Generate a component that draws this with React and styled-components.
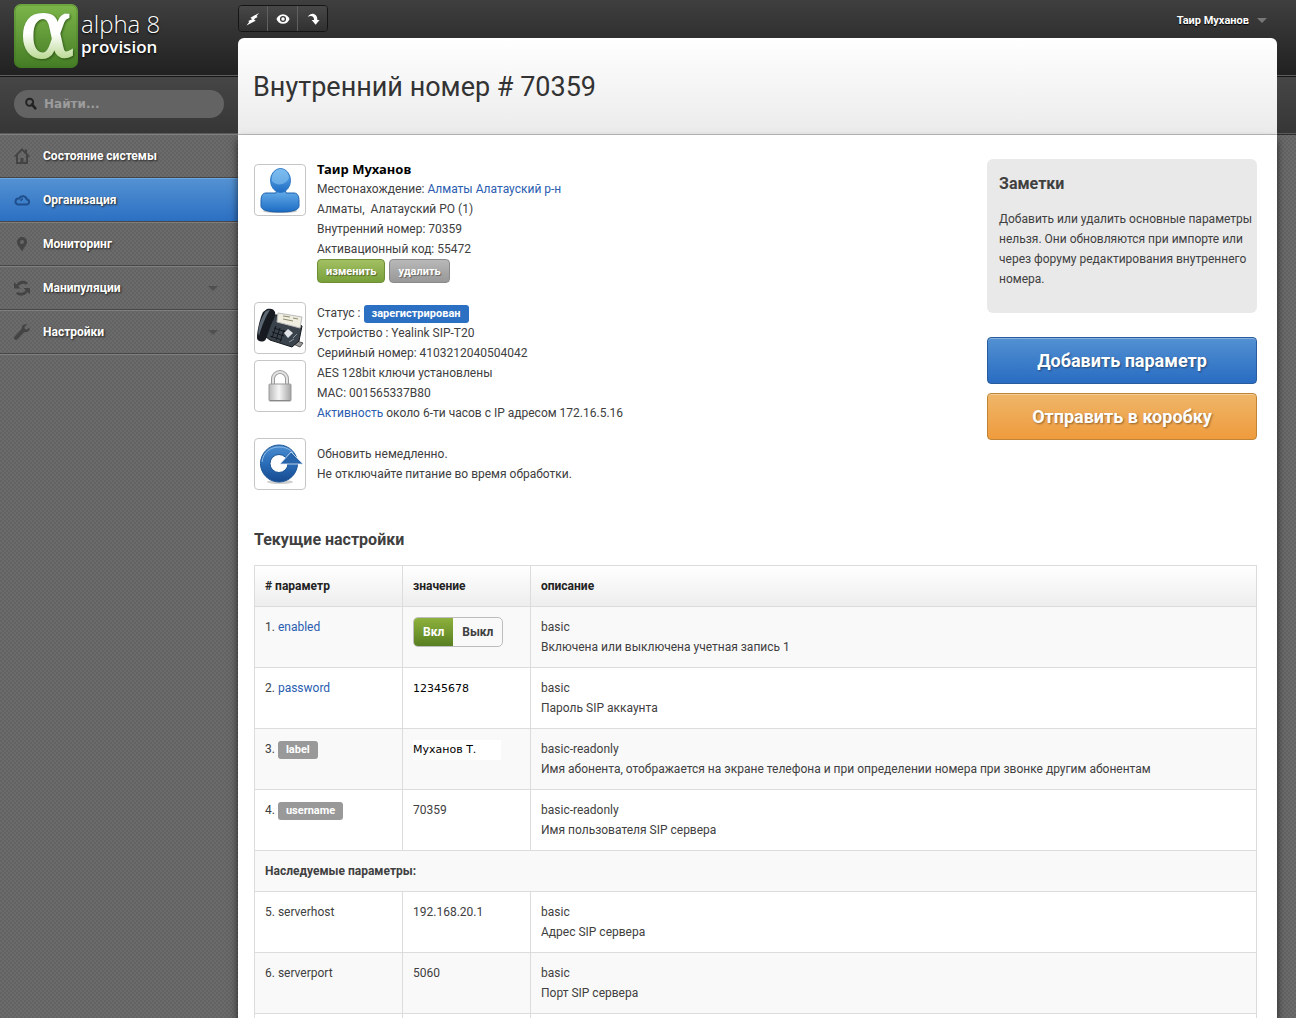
import React from "react";
import styled, { createGlobalStyle, css } from "styled-components";

const sans = 'Roboto, "Trebuchet MS", sans-serif';
const verdana = '"DejaVu Sans", Verdana, sans-serif';

const GlobalStyle = createGlobalStyle`
  * { box-sizing: border-box; }
  body { margin: 0; font: 12px/20px ${sans}; color: #404040; background: #666; }
  button, input { font-family: inherit; }
  h1, h2, p, ul { margin: 0; padding: 0; }
  a { color: #2a5db0; text-decoration: none; }
`;

const Page = styled.div`
  display: grid;
  grid-template-columns: 238px minmax(0, 1fr);
  min-height: 100vh;
  padding-right: 19px;
  background:
    linear-gradient(#3f3f3f, #212121 75px, #5e5e5e 75px, #5e5e5e 76px, #161616 76px, #161616 77px,
      #464646 77px, #363636 133px, #5a5a5a 133px, #5a5a5a 134px, #2c2c2c 134px, #2c2c2c 135px, transparent 135px)
      0 0 / 100% 135px no-repeat,
    repeating-conic-gradient(#6b6b6b 0 25%, #636363 0 50%) 0 0 / 4px 4px;
`;

const Sidebar = styled.aside`
  display: flex;
  flex-direction: column;
`;

const Brand = styled.a`
  display: flex;
  gap: 3px;
  height: 77px;
  padding: 4px 14px;
  color: #fff;
`;

const Logo = styled.svg`
  flex: none;
  overflow: visible;
`;

const LogoLetter = styled.text`
  font: 80px "DejaVu Serif", serif;
  filter: drop-shadow(1px 1px 1px rgba(30, 65, 12, 0.7));
`;

const BrandText = styled.span`
  display: flex;
  flex-direction: column;
  padding-top: 7px;
  font-family: "Open Sans", sans-serif;
  text-shadow: 0 1px 2px #000;
`;

const BrandTop = styled.span`
  font-size: 24px;
  font-weight: 300;
  line-height: 26px;
`;

const BrandBottom = styled.span`
  font-size: 17px;
  font-weight: 600;
  line-height: 20px;
`;

const SearchForm = styled.form`
  height: 57px;
  padding: 13px 14px;
`;

const SearchField = styled.label`
  display: flex;
  align-items: center;
  gap: 6px;
  height: 28px;
  padding: 0 10px;
  border-radius: 14px;
  background: #636363;
  color: #222;
`;

const SearchInput = styled.input`
  flex: 1;
  min-width: 0;
  padding: 0;
  border: 0;
  outline: 0;
  background: none;
  color: #fff;
  font: bold 12px/20px ${verdana};
  &::placeholder { color: #9c9c9c; opacity: 1; }
`;

const NavList = styled.ul`
  list-style: none;
`;

const NavLink = styled.a`
  display: flex;
  align-items: center;
  gap: 13px;
  height: 44px;
  padding: 0 20px 0 14px;
  border-top: 1px solid #808080;
  border-bottom: 1px solid #474747;
  color: #fff;
  font-size: 12px;
  font-weight: 700;
  text-shadow: 1px 1px 2px #222;
  svg { color: #444; flex: none; }
  ${(p) => p.$active && css`
    border-top-color: #6ba3dd;
    background: linear-gradient(#5391d2, #2c70c3);
    svg { color: #1f4f8c; }
  `}
`;

const NavText = styled.span`
  flex: 1;
`;

const Caret = styled.span`
  border: solid transparent;
  border-width: 5px 5px 0;
  border-top-color: ${(p) => p.$color};
`;

const NavEnd = styled.div`
  border-top: 1px solid #808080;
`;

const Main = styled.main`
  display: flex;
  flex-direction: column;
`;

const TopBar = styled.div`
  display: flex;
  justify-content: space-between;
  align-items: flex-start;
  height: 38px;
  padding: 5px 10px 0 0;
`;

const Toolbar = styled.div`
  display: flex;
  border: 1px solid #151515;
  border-radius: 4px;
  overflow: hidden;
`;

const ToolButton = styled.button`
  display: flex;
  align-items: center;
  justify-content: center;
  width: 30px;
  height: 25px;
  padding: 0;
  border: 0;
  border-left: 1px solid #606060;
  background: linear-gradient(#484848, #303030);
  color: #fff;
  &:first-child { border-left: 0; width: 28px; }
`;

const UserMenu = styled.button`
  display: flex;
  align-items: center;
  gap: 8px;
  height: 30px;
  padding: 0;
  border: 0;
  background: none;
  color: #fff;
  font-size: 11px;
  font-weight: 700;
  text-shadow: 0 1px 1px #000;
`;

const TitleBar = styled.header`
  padding: 29px 15px 27px;
  border-bottom: 1px solid #bdbdbd;
  border-radius: 6px 6px 0 0;
  background: linear-gradient(#fff, #ebebeb);
`;

const Title = styled.h1`
  color: #333;
  font-size: 27px;
  font-weight: 400;
  line-height: 40px;
`;

const Content = styled.div`
  flex: 1;
  padding: 24px 20px 0 16px;
  background: #fff;
  box-shadow: 0 5px 8px rgba(0, 0, 0, 0.65);
`;

const Overview = styled.div`
  display: grid;
  grid-template-columns: minmax(0, 1fr) 270px;
  gap: 20px;
`;

const Blocks = styled.div`
  display: flex;
  flex-direction: column;
  gap: 15px;
`;

const Block = styled.section`
  display: flex;
  gap: 11px;
`;

const Icons = styled.div`
  display: flex;
  flex-direction: column;
  gap: 6px;
  padding-top: ${(p) => p.$top || 0}px;
`;

const IconFrame = styled.div`
  display: flex;
  align-items: center;
  justify-content: center;
  width: 52px;
  height: 52px;
  border: 1px solid #c6c6c6;
  border-radius: 4px;
  background: #fff;
`;

const Lines = styled.div`
  padding-top: ${(p) => p.$top || 0}px;
`;

const PersonName = styled.h2`
  color: #000;
  font: bold 13px/20px "Noto Sans", sans-serif;
`;

const Actions = styled.div`
  display: flex;
  gap: 4px;
  padding-bottom: 4px;
`;

const SmallButton = styled.button`
  height: 24px;
  padding: 0 8px;
  border: 1px solid ${(p) => (p.$green ? "#6d8f36" : "#8a8a8a")};
  border-radius: 4px;
  background: ${(p) => (p.$green ? "linear-gradient(#a3c063, #78a03a)" : "linear-gradient(#b8b8b8, #989898)")};
  color: #fff;
  font-size: 11px;
  font-weight: 700;
  text-shadow: 1px 1px 1px rgba(0, 0, 0, 0.4);
`;

const Badge = styled.span`
  display: inline-block;
  padding: 0 8px;
  border-radius: 3px;
  background: ${(p) => (p.$blue ? "#2c70c3" : "#999")};
  color: #fff;
  font-size: 11px;
  font-weight: 700;
  line-height: 18px;
`;

const Side = styled.aside`
  display: flex;
  flex-direction: column;
`;

const Notes = styled.section`
  margin-bottom: 24px;
  padding: 13px 12px 24px;
  border-radius: 6px;
  background: #e9e9e9;
  white-space: nowrap;
`;

const Heading = styled.h2`
  margin-bottom: 13px;
  color: #404040;
  font-size: 16px;
  font-weight: 700;
  line-height: 24px;
`;

const BigButton = styled.button`
  height: 47px;
  margin-bottom: 9px;
  border: 1px solid ${(p) => (p.$orange ? "#bf8436" : "#285c9e")};
  border-radius: 4px;
  background: ${(p) => (p.$orange ? "linear-gradient(#efb669, #ef9b3d)" : "linear-gradient(#5391d2, #296cc2)")};
  box-shadow: inset 0 1px 0 rgba(255, 255, 255, 0.3);
  color: #fff;
  font-size: 18px;
  font-weight: 700;
  text-shadow: 1px 1px 2px rgba(0, 0, 0, 0.4);
`;

const Settings = styled.section`
  padding-top: 38px;
`;

const Table = styled.table`
  width: 100%;
  border-collapse: collapse;
  table-layout: fixed;
  th, td {
    padding: 10px;
    border: 1px solid #dcdcdc;
    text-align: left;
    vertical-align: top;
  }
  thead tr { background: linear-gradient(#fff, #ededed); }
  thead th { color: #222; font-weight: 700; }
  thead th:nth-child(1) { width: 148px; }
  thead th:nth-child(2) { width: 128px; }
  tbody tr:nth-child(odd) { background: #f9f9f9; }
  tbody tr:nth-child(even) { background: #fff; }
  tbody tr:last-child td { padding: 2px; border-bottom: 0; }
`;

const Typed = styled.span`
  display: inline-block;
  min-width: 88px;
  background: #fff;
  color: #000;
  font-family: ${verdana};
  font-size: 11px;
`;

const Toggle = styled.div`
  display: inline-flex;
  height: 30px;
  border: 1px solid #bdbdbd;
  border-radius: 5px;
  overflow: hidden;
  vertical-align: top;
`;

const ToggleOption = styled.label`
  padding: 0 9px;
  font-weight: 700;
  line-height: 28px;
  input { appearance: none; position: absolute; margin: 0; }
  &:has(input:checked) {
    background: linear-gradient(#8db13c, #587f22);
    color: #fff;
  }
`;

function LogoMark() {
  return (
    <Logo width="64" height="64" viewBox="0 0 64 64">
      <defs>
        <linearGradient id="logoBg" x1="0" y1="0" x2="0" y2="1">
          <stop offset="0" stopColor="#7db64a" /><stop offset="1" stopColor="#447c25" />
        </linearGradient>
        <linearGradient id="logoInk" gradientUnits="userSpaceOnUse" x1="0" y1="9" x2="0" y2="54">
          <stop offset="0.45" stopColor="#fff" /><stop offset="1" stopColor="#bddb98" />
        </linearGradient>
      </defs>
      <rect width="64" height="64" rx="7" fill="url(#logoBg)" />
      <rect x="1" y="1" width="62" height="62" rx="6" fill="none" stroke="#3f7521" strokeOpacity=".5" />
      <LogoLetter x="33" y="53" textAnchor="middle" fill="url(#logoInk)" stroke="url(#logoInk)" strokeWidth="2">α</LogoLetter>
    </Logo>
  );
}

const Glyph = ({ children, size = 16 }) => (
  <svg width={size} height={size} viewBox="0 0 16 16" fill="currentColor">{children}</svg>
);

const HomeIcon = () => (
  <Glyph><path fillRule="evenodd" d="M8 0 11 3V1.500h2V5l3 3.200-1 1-1-1V16H2V8.200l-1 1-1-1zM8 2.800 4 6.800V14h2.500v-4h3v4H12V6.800z" /></Glyph>
);
const CloudIcon = () => (
  <Glyph>
    <path fill="none" stroke="currentColor" strokeWidth="2" strokeLinejoin="round" d="M4 12.500h8.500a2.500 2.500 0 0 0 .3-5A4 4 0 0 0 5.200 6.600 3 3 0 0 0 4 12.500z" />
    <path fill="none" stroke="currentColor" strokeWidth="1.500" d="M7 9A2 2 0 0 1 9 7" />
  </Glyph>
);
const PinIcon = () => (
  <Glyph><path fillRule="evenodd" d="M8 1a5 5 0 0 1 5 5c0 3-3.500 6-5 9.500C6.500 12 3 9 3 6a5 5 0 0 1 5-5zm0 3a2 2 0 1 0 0 4 2 2 0 0 0 0-4z" /></Glyph>
);
const SwapIcon = () => (
  <Glyph>
    <path d="M0 2v6.500h6.500L4.300 6.300C6 3.800 9.500 3 13 4.500l.8-2C9.500-.4 4.800.6 2.400 4.400z" />
    <path d="M16 14.500V8H9.500l2.200 2.200c-1.700 2.500-5.200 3.300-8.700 1.800l-.8 2c4.300 2.900 9 1.900 11.400-1.900z" />
  </Glyph>
);
const WrenchIcon = () => (
  <Glyph><path d="M15.500 3.500 12.800 5.600 10.800 5 10.500 3 13.200.6C10.500-.4 7.200 1.300 7.600 5L.6 12.400a1.900 1.900 0 0 0 2.800 2.900l7-7.200c3.300.8 6-1.600 5.100-4.600z" /></Glyph>
);
const SearchIcon = () => (
  <Glyph size={14}><circle cx="6.500" cy="6" r="4" fill="none" stroke="currentColor" strokeWidth="2.200" /><path d="m9 8.500 4 4.500" stroke="currentColor" strokeWidth="3" strokeLinecap="round" /></Glyph>
);
const BoltIcon = () => (
  <Glyph size={14}><path d="M15 1 5 6.500l2 1.800-4.500 2 1.200 1.200L.5 15.500 11 10 9 8.200l4.300-2.400-1.200-1.200z" /></Glyph>
);
const EyeIcon = () => (
  <Glyph size={14}><path fillRule="evenodd" d="M8 2.500c3.600 0 6.500 2.500 7.500 5.500-1 3-3.900 5.500-7.500 5.500S1.500 11 .5 8C1.500 5 4.400 2.500 8 2.500zm0 2a3.500 3.500 0 1 0 0 7 3.500 3.500 0 0 0 0-7z" /><circle cx="8" cy="8" r="2" /></Glyph>
);
const TurnIcon = () => (
  <Glyph size={14}><path d="M2 5.500C4 2.500 7 1.500 9.500 2.500c2.300.9 3.500 3 3.500 6.500h2.500l-4.500 5.500L6.500 9h2.700c0-3.500-2.700-5.500-7.200-3.500z" /></Glyph>
);

const PersonPicture = () => (
  <svg width="44" height="46" viewBox="0 0 44 46">
    <defs>
      <linearGradient id="person" x1="0" y1="0" x2="0" y2="1"><stop offset="0" stopColor="#6bb2ec" /><stop offset="1" stopColor="#1d6cc4" /></linearGradient>
    </defs>
    <ellipse cx="22" cy="44" rx="17" ry="2" fill="#bbb" />
    <path d="M8 26h10l1-4h8l1 4h8c4 0 5 4 5 8v5c0 4-7 6-19 6S3 43 3 39v-5c0-4 1-8 5-8z" fill="url(#person)" stroke="#1c62b0" />
    <ellipse cx="22.500" cy="13.500" rx="10" ry="12" fill="url(#person)" stroke="#2d78c4" />
    <path d="M14 14c4 5 13 5 17-3-1-6-4-9-8.500-9S13 6 14 14z" fill="#8ec8f4" opacity=".55" />
  </svg>
);

const PhonePicture = () => (
  <svg width="50" height="44" viewBox="0 0 50 44">
    <path d="M42 35l6 2-3 4-9-4z" fill="#999" stroke="#555" />
    <path d="M14 9l10 0 23 11-3 15-7 6-22-7-8-6z" fill="#3a424b" stroke="#15181c" />
    <path d="M23 7l24 4-2 11-23-6z" fill="#efeee0" stroke="#bbb" />
    <path d="M28 10l7 1M28 13l10 2M38 12l5 1" stroke="#8e8b70" />
    <path d="M12 3c4-1 7 0 8 3 1 4-2 8-4 13l-5 14c-2 4-9 3-9-1C2 25 5 12 8 6z" fill="#171b21" />
    <path d="M9 8c1-3 3-4 6-4-4 6-8 15-11 26-2-6 1-15 5-22z" fill="#5c6773" />
    <path d="M19 22l12 4M17 26l12 4M15 30l12 4M21 20l-4 12M25 22l-4 12M29 24l-4 12" stroke="#14181d" />
    <path d="M33 23l5 4-5 5-4-5z" fill="#e2e5e8" />
    <path d="M38 32l4-4M34 36l5-3" stroke="#8b939c" />
  </svg>
);

const LockPicture = () => (
  <svg width="26" height="34" viewBox="0 0 26 34">
    <defs>
      <linearGradient id="lock" x1="0" y1="0" x2="1" y2="0"><stop offset="0" stopColor="#b9b9b9" /><stop offset=".45" stopColor="#f6f6f6" /><stop offset="1" stopColor="#a5a5a5" /></linearGradient>
    </defs>
    <path d="M6 18V10a7 7 0 0 1 14 0v8" fill="none" stroke="#9b9b9b" strokeWidth="4" />
    <path d="M6 18V10a7 7 0 0 1 14 0v8" fill="none" stroke="#e2e2e2" strokeWidth="2" />
    <rect x="2" y="15" width="22" height="17" rx="1" fill="url(#lock)" stroke="#999" />
    <path d="M3 31.500h20" stroke="#888" />
  </svg>
);

const RefreshPicture = () => (
  <svg width="46" height="44" viewBox="0 0 46 44">
    <defs>
      <linearGradient id="refresh" x1="0" y1="0" x2="0" y2="1"><stop offset="0" stopColor="#4a8dd0" /><stop offset=".5" stopColor="#2a6db8" /><stop offset="1" stopColor="#164a90" /></linearGradient>
    </defs>
    <ellipse cx="23" cy="40" rx="13" ry="2" fill="#d0d0d0" />
    <path fillRule="evenodd" d="M22 3a18.500 18.500 0 1 0 0 37 18.500 18.500 0 0 0 0-37zm0 9.500a9 9 0 1 1 0 18 9 9 0 0 1 0-18z" fill="url(#refresh)" stroke="#1c5596" />
    <path d="M5 20C6 10 14 5 22 5c6 0 11 2 14 6" fill="none" stroke="#8cbbe8" />
    <path d="M34 10l12 12H23z" fill="#2764ab" stroke="#dbe8f5" strokeWidth=".8" />
  </svg>
);

const navItems = [
  { text: "Состояние системы", Icon: HomeIcon },
  { text: "Организация", Icon: CloudIcon, active: true },
  { text: "Мониторинг", Icon: PinIcon },
  { text: "Манипуляции", Icon: SwapIcon, more: true },
  { text: "Настройки", Icon: WrenchIcon, more: true },
];

function OnOff() {
  return (
    <Toggle role="radiogroup" aria-label="enabled">
      <ToggleOption><input type="radio" name="enabled" defaultChecked />Вкл</ToggleOption>
      <ToggleOption><input type="radio" name="enabled" />Выкл</ToggleOption>
    </Toggle>
  );
}

const ownRows = [
  { n: 1, name: <a href="#enabled">enabled</a>, value: <OnOff />, kind: "basic", text: "Включена или выключена учетная запись 1" },
  { n: 2, name: <a href="#password">password</a>, value: <Typed>12345678</Typed>, kind: "basic", text: "Пароль SIP аккаунта" },
  { n: 3, name: <Badge>label</Badge>, value: <Typed>Муханов Т.</Typed>, kind: "basic-readonly", text: "Имя абонента, отображается на экране телефона и при определении номера при звонке другим абонентам" },
  { n: 4, name: <Badge>username</Badge>, value: "70359", kind: "basic-readonly", text: "Имя пользователя SIP сервера" },
];
const inheritedRows = [
  { n: 5, name: "serverhost", value: "192.168.20.1", kind: "basic", text: "Адрес SIP сервера" },
  { n: 6, name: "serverport", value: "5060", kind: "basic", text: "Порт SIP сервера" },
];

const Row = ({ row }) => (
  <tr>
    <td>{row.n}. {row.name}</td>
    <td>{row.value}</td>
    <td>{row.kind}<br />{row.text}</td>
  </tr>
);

export default function App() {
  return (
    <>
      <GlobalStyle />
      <Page>
        <Sidebar>
          <Brand href="#home">
            <LogoMark />
            <BrandText><BrandTop>alpha 8</BrandTop><BrandBottom>provision</BrandBottom></BrandText>
          </Brand>
          <SearchForm>
            <SearchField><SearchIcon /><SearchInput type="text" placeholder="Найти..." /></SearchField>
          </SearchForm>
          <nav>
            <NavList>
              {navItems.map(({ text, Icon, active, more }) => (
                <li key={text}>
                  <NavLink href="#nav" $active={active}>
                    <Icon /><NavText>{text}</NavText>{more && <Caret $color="#505050" />}
                  </NavLink>
                </li>
              ))}
            </NavList>
            <NavEnd />
          </nav>
        </Sidebar>
        <Main>
          <TopBar>
            <Toolbar>
              <ToolButton aria-label="bolt"><BoltIcon /></ToolButton>
              <ToolButton aria-label="eye"><EyeIcon /></ToolButton>
              <ToolButton aria-label="turn"><TurnIcon /></ToolButton>
            </Toolbar>
            <UserMenu>Таир Муханов <Caret $color="#777" /></UserMenu>
          </TopBar>
          <TitleBar><Title>Внутренний номер # 70359</Title></TitleBar>
          <Content>
            <Overview>
              <Blocks>
                <Block>
                  <Icons $top={5}><IconFrame><PersonPicture /></IconFrame></Icons>
                  <Lines>
                    <PersonName>Таир Муханов</PersonName>
                    <p>Местонахождение: <a href="#place">Алматы Алатауский р-н</a></p>
                    <p>Алматы, &nbsp;Алатауский РО (1)</p>
                    <p>Внутренний номер: 70359</p>
                    <p>Активационный код: 55472</p>
                    <Actions><SmallButton $green>изменить</SmallButton><SmallButton>удалить</SmallButton></Actions>
                  </Lines>
                </Block>
                <Block>
                  <Icons><IconFrame><PhonePicture /></IconFrame><IconFrame><LockPicture /></IconFrame></Icons>
                  <Lines $top={1}>
                    <p>Статус : <Badge $blue>зарегистрирован</Badge></p>
                    <p>Устройство : Yealink SIP-T20</p>
                    <p>Серийный номер: 4103212040504042</p>
                    <p>AES 128bit ключи установлены</p>
                    <p>MAC: 001565337B80</p>
                    <p><a href="#activity">Активность</a> около 6-ти часов с IP адресом 172.16.5.16</p>
                  </Lines>
                </Block>
                <Block>
                  <Icons><IconFrame><RefreshPicture /></IconFrame></Icons>
                  <Lines $top={6}>
                    <p>Обновить немедленно.</p>
                    <p>Не отключайте питание во время обработки.</p>
                  </Lines>
                </Block>
              </Blocks>
              <Side>
                <Notes>
                  <Heading>Заметки</Heading>
                  <p>Добавить или удалить основные параметры<br />нельзя. Они обновляются при импорте или<br />через форуму редактирования внутреннего<br />номера.</p>
                </Notes>
                <BigButton>Добавить параметр</BigButton>
                <BigButton $orange>Отправить в коробку</BigButton>
              </Side>
            </Overview>
            <Settings>
              <Heading>Текущие настройки</Heading>
              <Table>
                <thead><tr><th># параметр</th><th>значение</th><th>описание</th></tr></thead>
                <tbody>
                  {ownRows.map((row) => <Row key={row.n} row={row} />)}
                  <tr><th colSpan={3}>Наследуемые параметры:</th></tr>
                  {inheritedRows.map((row) => <Row key={row.n} row={row} />)}
                  <tr><td /><td /><td /></tr>
                </tbody>
              </Table>
            </Settings>
          </Content>
        </Main>
      </Page>
    </>
  );
}
